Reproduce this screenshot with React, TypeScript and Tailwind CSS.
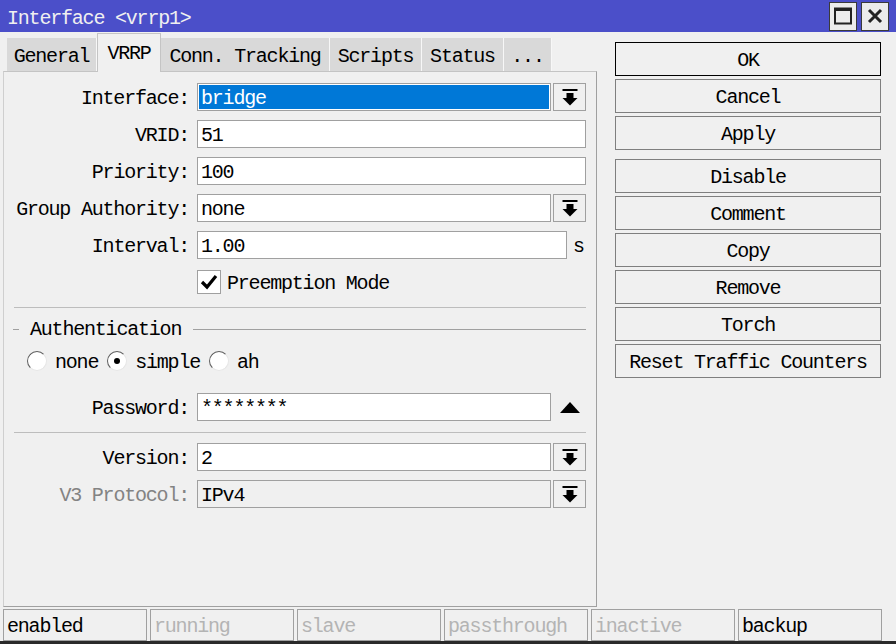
import React from 'react';

const mono = "font-['Liberation_Mono','DejaVu_Sans_Mono',monospace]";

const DropIcon = () => (
  <svg width="16" height="17" viewBox="0 0 16 17">
    <rect x="0.5" y="0" width="15" height="2" fill="#000" />
    <rect x="4.5" y="4" width="7" height="5" fill="#000" />
    <polygon points="0.5,9 15.5,9 8,16.5" fill="#000" />
  </svg>
);

const DropButton = () => (
  <div className="ml-[2px] flex h-[28px] w-[33px] shrink-0 items-center justify-center border border-[#a0a0a0] bg-[#f0f0f0]">
    <DropIcon />
  </div>
);

type RowProps = {
  label: string;
  dim?: boolean;
  className?: string;
  children: React.ReactNode;
};

const Row = ({ label, dim, className = '', children }: RowProps) => (
  <div className={`flex h-[28px] items-center ${className}`}>
    <div className={`w-[185px] shrink-0 pt-[3px] text-right ${dim ? 'text-[#838383]' : 'text-black'}`}>{label}</div>
    <div className="ml-[8px] flex flex-1 items-center">{children}</div>
  </div>
);

const Field = ({ value, selected, disabled, className = 'flex-1' }: { value: string; selected?: boolean; disabled?: boolean; className?: string }) => (
  <div
    className={`flex h-[28px] items-center border border-[#a0a0a0] ${className} ${
      selected ? 'bg-[#0078d7] text-white ring-1 ring-inset ring-white' : disabled ? 'bg-[#f0f0f0] text-black' : 'bg-white text-black'
    }`}
  >
    <span className="pl-[3px] pt-[3px] leading-none">{value}</span>
  </div>
);

const Radio = ({ checked }: { checked?: boolean }) => (
  <span className="flex h-[20px] w-[20px] items-center justify-center rounded-full border border-b-[#e6e6e6] border-l-[#5e5e5e] border-r-[#e6e6e6] border-t-[#5e5e5e] bg-white">
    {checked && <span className="h-[6px] w-[6px] rounded-full bg-black" />}
  </span>
);

const tabs = [
  { name: 'General', w: 'w-[90px]' },
  { name: 'VRRP', w: 'w-[64px]', active: true },
  { name: 'Conn. Tracking', w: 'w-[169px]' },
  { name: 'Scripts', w: 'w-[92px]' },
  { name: 'Status', w: 'w-[82px]' },
  { name: '...', w: 'w-[48px]' },
];

const buttons = ['OK', 'Cancel', 'Apply', 'Disable', 'Comment', 'Copy', 'Remove', 'Torch', 'Reset Traffic Counters'];

const statuses = [
  { name: 'enabled', on: true },
  { name: 'running' },
  { name: 'slave' },
  { name: 'passthrough' },
  { name: 'inactive' },
  { name: 'backup', on: true },
];

export default function App() {
  return (
    <div className={`flex h-[644px] w-[896px] flex-col overflow-hidden bg-[#f0f0f0] text-[20px] tracking-[-1.2px] text-black ${mono}`}>
      {/* title bar */}
      <div className="flex h-[32px] shrink-0 items-center bg-[#4b4fc9] pl-[7px] pr-[7px]">
        <span className="flex-1 pt-[5px] text-[#f0f0f0]">Interface &lt;vrrp1&gt;</span>
        <div className="flex h-[29px] w-[28px] items-center justify-center border border-[#3a3a3a] bg-[#ececec]">
          <svg width="18" height="18" viewBox="0 0 18 18">
            <rect x="1" y="1.5" width="16" height="15" fill="none" stroke="#222" strokeWidth="2" />
            <rect x="1" y="1" width="16" height="3" fill="#222" />
          </svg>
        </div>
        <div className="ml-[4px] flex h-[29px] w-[28px] items-center justify-center border border-[#3a3a3a] bg-[#ececec]">
          <svg width="16" height="16" viewBox="0 0 16 16">
            <path d="M2 2 L14 14 M14 2 L2 14" stroke="#222" strokeWidth="3" />
          </svg>
        </div>
      </div>

      <div className="flex flex-1">
        {/* left: tabs + panel */}
        <div className="ml-[3px] flex w-[594px] flex-col">
          <div className="flex h-[39px] items-end pl-[4px]">
            {tabs.map((t) =>
              t.active ? (
                <div
                  key={t.name}
                  className={`relative z-10 -mb-px flex h-[39px] ${t.w} items-center justify-center border-l border-r border-t border-[#c4c4c4] bg-[#f0f0f0] pt-[2px]`}
                >
                  {t.name}
                </div>
              ) : (
                <div
                  key={t.name}
                  className={`flex h-[33px] ${t.w} items-center justify-center border-r border-[#f7f7f7] bg-[#d9d9d9] pt-[5px]`}
                >
                  {t.name}
                </div>
              )
            )}
          </div>

          <div className="flex h-[536px] flex-col border border-b-[#a0a0a0] border-l-[#cfcfcf] border-r-[#a0a0a0] border-t-[#c4c4c4] pr-[10px] pt-[11px]">
            <Row label="Interface:">
              <Field value="bridge" selected />
              <DropButton />
            </Row>
            <Row label="VRID:" className="mt-[9px]">
              <Field value="51" />
            </Row>
            <Row label="Priority:" className="mt-[9px]">
              <Field value="100" />
            </Row>
            <Row label="Group Authority:" className="mt-[9px]">
              <Field value="none" />
              <DropButton />
            </Row>
            <Row label="Interval:" className="mt-[9px]">
              <Field value="1.00" className="w-[370px]" />
              <span className="ml-[6px] pt-[3px]">s</span>
            </Row>

            <div className="mt-[11px] flex h-[24px] items-center pl-[193px]">
              <span className="flex h-[24px] w-[24px] items-center justify-center border border-[#a0a0a0] bg-white">
                <svg width="18" height="18" viewBox="0 0 18 18">
                  <path d="M2 9 L7 14 L16 3" fill="none" stroke="#000" strokeWidth="3.2" />
                </svg>
              </span>
              <span className="ml-[6px] pt-[4px]">Preemption Mode</span>
            </div>

            <div className="ml-[10px] mt-[13px] h-px bg-[#bdbdbd]" />

            <div className="mt-[10px] flex h-[22px] items-center">
              <span className="ml-[9px] h-px w-[6px] bg-[#a0a0a0]" />
              <span className="ml-[11px] pt-[2px]">Authentication</span>
              <span className="ml-[12px] h-px flex-1 bg-[#a0a0a0]" />
            </div>

            <div className="mt-[10px] flex h-[22px] items-center pl-[23px]">
              <Radio />
              <span className="ml-[8px] pt-[3px]">none</span>
              <span className="ml-[9px]">
                <Radio checked />
              </span>
              <span className="ml-[8px] pt-[3px]">simple</span>
              <span className="ml-[9px]">
                <Radio />
              </span>
              <span className="ml-[8px] pt-[3px]">ah</span>
            </div>

            <Row label="Password:" className="mt-[21px]">
              <Field value="********" />
              <div className="ml-[2px] flex h-[28px] w-[33px] shrink-0 items-center justify-center">
                <svg width="20" height="11" viewBox="0 0 20 11">
                  <polygon points="10,0 20,11 0,11" fill="#000" />
                </svg>
              </div>
            </Row>

            <div className="ml-[10px] mt-[11px] h-px bg-[#bdbdbd]" />

            <Row label="Version:" className="mt-[10px]">
              <Field value="2" />
              <DropButton />
            </Row>
            <Row label="V3 Protocol:" dim className="mt-[9px]">
              <Field value="IPv4" disabled />
              <DropButton />
            </Row>
          </div>
        </div>

        {/* right: buttons */}
        <div className="ml-[18px] mt-[10px] flex w-[266px] flex-col">
          {buttons.map((b, i) => (
            <div
              key={b}
              className={`flex h-[34px] items-center justify-center border bg-[#f0f0f0] pt-[3px] ${
                i === 0 ? 'border-black' : 'border-[#7f7f7f]'
              } ${i === 0 ? '' : i === 3 ? 'mt-[9px]' : 'mt-[3px]'}`}
            >
              {b}
            </div>
          ))}
        </div>
      </div>

      {/* status bar */}
      <div className="mt-[2px] flex h-[35px] shrink-0 gap-[3px] border-b-[3px] border-[#2a2a2a] pl-[3px]">
        {statuses.map((s) => (
          <div
            key={s.name}
            className={`flex h-[32px] w-[144px] items-center border border-[#a0a0a0] pl-[3px] pt-[3px] ${
              s.on ? 'text-black' : 'text-[#b4b4b4]'
            }`}
          >
            {s.name}
          </div>
        ))}
      </div>
    </div>
  );
}
